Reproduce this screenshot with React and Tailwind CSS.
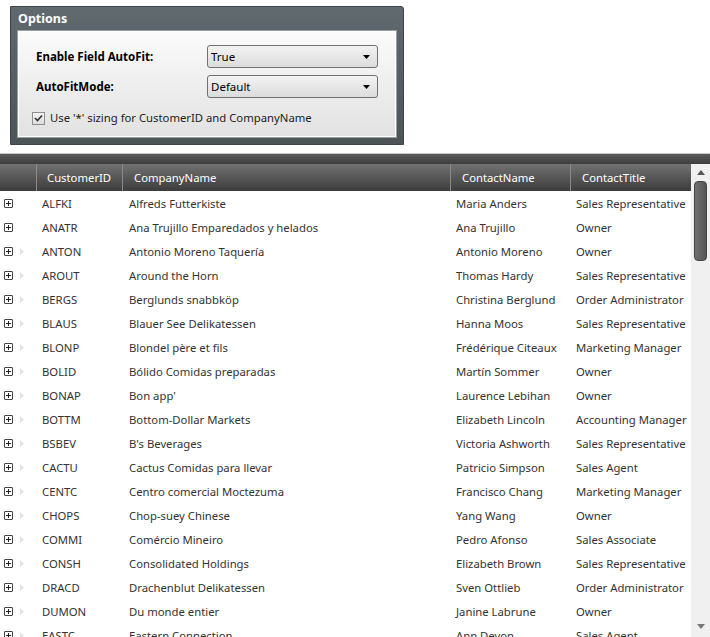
import React from 'react';

const rows = [
  ['ALFKI', 'Alfreds Futterkiste', 'Maria Anders', 'Sales Representative'],
  ['ANATR', 'Ana Trujillo Emparedados y helados', 'Ana Trujillo', 'Owner'],
  ['ANTON', 'Antonio Moreno Taquería', 'Antonio Moreno', 'Owner'],
  ['AROUT', 'Around the Horn', 'Thomas Hardy', 'Sales Representative'],
  ['BERGS', 'Berglunds snabbköp', 'Christina Berglund', 'Order Administrator'],
  ['BLAUS', 'Blauer See Delikatessen', 'Hanna Moos', 'Sales Representative'],
  ['BLONP', 'Blondel père et fils', 'Frédérique Citeaux', 'Marketing Manager'],
  ['BOLID', 'Bólido Comidas preparadas', 'Martín Sommer', 'Owner'],
  ['BONAP', "Bon app'", 'Laurence Lebihan', 'Owner'],
  ['BOTTM', 'Bottom-Dollar Markets', 'Elizabeth Lincoln', 'Accounting Manager'],
  ['BSBEV', "B's Beverages", 'Victoria Ashworth', 'Sales Representative'],
  ['CACTU', 'Cactus Comidas para llevar', 'Patricio Simpson', 'Sales Agent'],
  ['CENTC', 'Centro comercial Moctezuma', 'Francisco Chang', 'Marketing Manager'],
  ['CHOPS', 'Chop-suey Chinese', 'Yang Wang', 'Owner'],
  ['COMMI', 'Comércio Mineiro', 'Pedro Afonso', 'Sales Associate'],
  ['CONSH', 'Consolidated Holdings', 'Elizabeth Brown', 'Sales Representative'],
  ['DRACD', 'Drachenblut Delikatessen', 'Sven Ottlieb', 'Order Administrator'],
  ['DUMON', 'Du monde entier', 'Janine Labrune', 'Owner'],
  ['EASTC', 'Eastern Connection', 'Ann Devon', 'Sales Agent'],
];

const font = { fontFamily: '"Noto Sans", "Open Sans", sans-serif' };

const Select = ({ value }) => (
  <div className="w-[171px] h-[23px] rounded-[3px] border border-[#707070] bg-gradient-to-b from-[#f3f3f3] to-[#dcdcdc] flex items-center justify-between pl-[3px] pr-[7px] text-[11.5px] text-black">
    <span>{value}</span>
    <svg width="7" height="4" viewBox="0 0 7 4"><path d="M0 0h7L3.5 4z" fill="#000" /></svg>
  </div>
);

const Plus = () => (
  <div className="w-[9px] h-[9px] border border-[#444] rounded-[1px] bg-white flex items-center justify-center">
    <svg width="7" height="7" viewBox="0 0 7 7"><path d="M1 3.5h5M3.5 1v5" stroke="#222" strokeWidth="1" /></svg>
  </div>
);

const App = () => {
  return (
    <div className="w-[710px] h-[637px] bg-white overflow-hidden text-[#222]" style={font}>
      {/* options panel */}
      <div className="pt-[6px] pl-[10px]">
        <div className="w-[394px] h-[139px] border border-[#3c4448] rounded-tr-[3px] bg-gradient-to-b from-[#606a6e] to-[#4c5458] px-[6px] pb-[6px] flex flex-col">
          <div className="h-[23px] pt-[1px] flex items-center pl-[1px] text-white font-bold text-[12.5px]">Options</div>
          <div className="flex-1 border border-[#9aa0a2] bg-white p-[1px]">
            <div className="h-full bg-gradient-to-b from-[#fbfbfb] to-[#e2e2e2] pl-[17px] pt-[13px] flex flex-col gap-[7px]">
              <div className="flex items-center">
                <span className="w-[171px] font-bold text-[11.5px] text-black">Enable Field AutoFit:</span>
                <Select value="True" />
              </div>
              <div className="flex items-center">
                <span className="w-[171px] font-bold text-[11.5px] text-black">AutoFitMode:</span>
                <Select value="Default" />
              </div>
              <div className="flex items-center gap-[5px] mt-[5px] -ml-[4px]">
                <div className="w-[13px] h-[13px] border border-[#8e8f8f] bg-gradient-to-b from-[#f4f4f4] to-[#dedede] flex items-center justify-center">
                  <svg width="9" height="8" viewBox="0 0 9 8"><path d="M1 4l2.5 2.5L8 1.5" stroke="#333" strokeWidth="1.7" fill="none" /></svg>
                </div>
                <span className="text-[11.3px] text-[#222]">Use '*' sizing for CustomerID and CompanyName</span>
              </div>
            </div>
          </div>
        </div>
      </div>

      {/* grid */}
      <div className="mt-[8px] border-t border-[#c8c8c8]">
        <div className="h-[10px] bg-gradient-to-b from-[#5a5a5a] to-[#3e3e3e]" />
        <div className="flex">
          <div className="w-[691px]">
            <div className="h-[27px] pt-[2px] flex bg-gradient-to-b from-[#727272] to-[#3c3c3c] text-white text-[11.3px]">
              <div className="w-[37px] border-r border-[#8a8a8a] -mt-[2px]" />
              <div className="w-[86px] border-r border-[#8a8a8a] -mt-[2px] pt-[2px] pl-[10px] flex items-center">CustomerID</div>
              <div className="w-[328px] border-r border-[#8a8a8a] -mt-[2px] pt-[2px] pl-[11px] flex items-center">CompanyName</div>
              <div className="w-[120px] border-r border-[#8a8a8a] -mt-[2px] pt-[2px] pl-[11px] flex items-center">ContactName</div>
              <div className="flex-1 -mt-[2px] pt-[2px] pl-[11px] flex items-center">ContactTitle</div>
            </div>
            {rows.map((r, i) => (
              <div key={r[0]} className="h-[24px] pt-[2px] flex items-center text-[11.3px] text-[#333] whitespace-nowrap">
                <div className="w-[37px] -mt-[2px] flex items-center pl-[4px] gap-[7px]">
                  <Plus />
                  {i > 1 && (
                    <svg width="4" height="7" viewBox="0 0 4 7"><path d="M0 0l4 3.5L0 7z" fill="#e4e4e4" /></svg>
                  )}
                </div>
                <div className="w-[86px] pl-[5px]">{r[0]}</div>
                <div className="w-[328px] pl-[6px]">{r[1]}</div>
                <div className="w-[120px] pl-[5px]">{r[2]}</div>
                <div className="flex-1 pl-[5px] overflow-hidden">{r[3]}</div>
              </div>
            ))}
          </div>
          <div className="w-[19px] h-[473px] bg-[#f0f0f0] flex flex-col items-center">
            <svg className="mt-[6px]" width="8" height="5" viewBox="0 0 8 5"><path d="M0 5L4 0l4 5z" fill="#555" /></svg>
            <div className="mt-[6px] w-[13px] h-[80px] rounded-[4px] border border-[#444] bg-gradient-to-r from-[#707070] to-[#555]" />
            <div className="flex-1" />
            <svg className="mb-[8px]" width="8" height="5" viewBox="0 0 8 5"><path d="M0 0h8L4 5z" fill="#777" /></svg>
          </div>
        </div>
      </div>
    </div>
  );
};

export default App;
